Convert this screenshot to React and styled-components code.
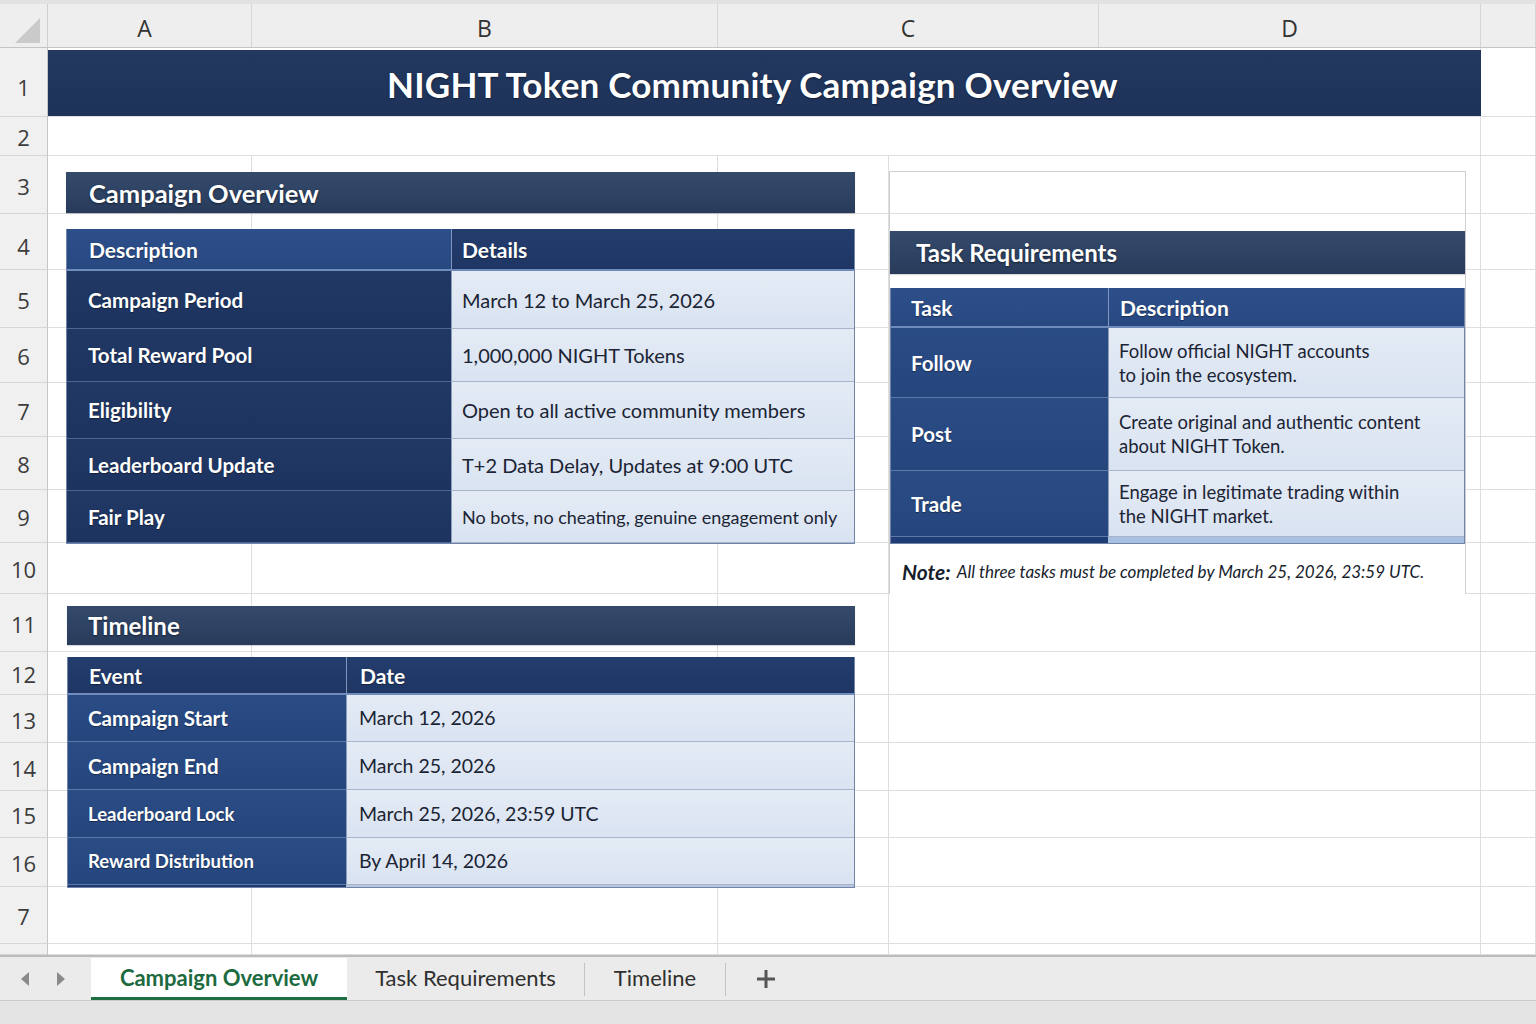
import React from 'react';
import styled, { createGlobalStyle } from 'styled-components';

const GlobalStyle = createGlobalStyle`
  *, *::before, *::after { box-sizing: border-box; }
  html, body { margin: 0; padding: 0; }
  body { font-family: Lato, "Open Sans", sans-serif; background: #ffffff; }
`;

const ROWS = [69, 39, 58, 56, 58, 55, 54, 53, 53, 51, 58, 43, 48, 48, 47, 49, 57, 11];
const ROW_LABELS = ['1', '2', '3', '4', '5', '6', '7', '8', '9', '10', '11', '12', '13', '14', '15', '16', '7', ''];

const Page = styled.div`
  width: 1536px;
  height: 1024px;
  overflow: hidden;
  display: flex;
  flex-direction: column;
  background: #fff;
`;

const ColumnHeaders = styled.div`
  flex: none;
  height: 48px;
  display: grid;
  grid-template-columns: 48px 204px 466px 381px 382px 1fr;
  background: #eeeeee;
  border-top: 4px solid #e2e2e2;
  border-bottom: 1px solid #c4c4c4;
`;

const Corner = styled.div`
  position: relative;
  border-right: 1px solid #cfcfcf;
  &::after {
    content: '';
    position: absolute;
    left: 15px;
    top: 14px;
    width: 25px;
    height: 25px;
    background: #cacaca;
    clip-path: polygon(100% 0, 100% 100%, 0 100%);
  }
`;

const ColLetter = styled.div`
  display: flex;
  align-items: center;
  justify-content: center;
  padding: 4px ${(p) => p.$shift || 0}px 0 0;
  font-family: "Open Sans", sans-serif;
  font-size: 23px;
  color: #333;
  border-right: 1px solid #d6d6d6;
`;

const Sheet = styled.div`
  flex: none;
  display: grid;
  grid-template-columns: 48px 204px 466px 171px 592px 55px;
  grid-template-rows: ${ROWS.map((h) => h + 'px').join(' ')};
`;

const RowHead = styled.div`
  grid-column: 1;
  grid-row: ${(p) => p.$row};
  display: flex;
  align-items: center;
  justify-content: center;
  padding-top: ${(p) => (p.$row === 1 ? 10 : p.$row === 4 ? 8 : 2)}px;
  background: #f0f0f0;
  border-right: 1px solid #c6c6c6;
  border-bottom: 1px solid #d6d6d6;
  font-family: "Open Sans", sans-serif;
  font-size: 22px;
  color: #3c3c3c;
`;

const GridCell = styled.div`
  grid-row: ${(p) => p.$row};
  grid-column: ${(p) => p.$col};
  border-bottom: 1px solid #dedede;
  border-right: 1px solid #dedede;
`;

const TitleBar = styled.div`
  grid-row: 1;
  grid-column: 2 / 6;
  margin: 2px 0 1px;
  display: flex;
  align-items: center;
  justify-content: center;
  padding: 2px 24px 0 0;
  background: linear-gradient(180deg, #22385f 0%, #1f335a 100%);
  color: #fff;
  font-size: 35px;
  font-weight: 700;
  letter-spacing: 0.2px;
  text-shadow: 0 1px 2px rgba(0, 0, 0, 0.45);
`;

const Panel = styled.div`
  grid-row: ${(p) => p.$rows};
  grid-column: ${(p) => p.$cols};
  margin: ${(p) => p.$margin};
  width: ${(p) => p.$width}px;
  display: flex;
  flex-direction: column;
  position: relative;
  z-index: 1;
`;

const BoxedPanel = styled(Panel)`
  border: 1px solid #cfcfcf;
`;

const Spacer = styled.div`
  flex: none;
  height: ${(p) => p.$h}px;
`;

const SectionBar = styled.div`
  flex: none;
  height: ${(p) => p.$h}px;
  display: flex;
  align-items: center;
  padding-left: ${(p) => p.$pad}px;
  background: linear-gradient(180deg, #354a6b 0%, #2e4263 55%, #283b5a 100%);
  color: #fff;
  font-size: ${(p) => p.$size}px;
  font-weight: 700;
  text-shadow: 0 1px 2px rgba(0, 0, 0, 0.5);
  box-shadow: 0 1px 1px rgba(0, 0, 0, 0.15);
`;

const Table = styled.div`
  flex: none;
  display: grid;
  grid-template-columns: ${(p) => p.$first}px 1fr;
  grid-auto-rows: auto;
  border: 1px solid #6f84a8;
  border-top: none;
`;

const HeadCell = styled.div`
  height: ${(p) => p.$h}px;
  display: flex;
  align-items: center;
  padding-left: ${(p) => p.$pad}px;
  background: ${(p) =>
    p.$tone === 'bright'
      ? 'linear-gradient(180deg, #2d4f89 0%, #284882 100%)'
      : 'linear-gradient(180deg, #233d6d 0%, #1f3664 100%)'};
  border-left: ${(p) => (p.$divide ? '1px solid #7f95bb' : 'none')};
  border-bottom: 2px solid #6f8bbb;
  color: #fff;
  font-size: 21px;
  font-weight: 700;
  text-shadow: 0 1px 1px rgba(0, 0, 0, 0.4);
`;

const LabelCell = styled.div`
  height: ${(p) => p.$h}px;
  display: flex;
  align-items: center;
  padding-left: ${(p) => p.$pad}px;
  background: ${(p) =>
    p.$tone === 'bright'
      ? 'linear-gradient(180deg, #2a4c85 0%, #25457d 100%)'
      : 'linear-gradient(180deg, #213865 0%, #1d335f 100%)'};
  border-bottom: 1px solid ${(p) => (p.$tone === 'bright' ? '#5c79a8' : '#4b6594')};
  color: #fff;
  font-size: ${(p) => p.$size}px;
  font-weight: 700;
  text-shadow: 0 1px 1px rgba(0, 0, 0, 0.4);
`;

const ValueCell = styled.div`
  height: ${(p) => p.$h}px;
  display: flex;
  align-items: center;
  padding-left: ${(p) => p.$pad}px;
  background: linear-gradient(180deg, #e4ebf5 0%, #d9e3f1 100%);
  border-left: 1px solid #8c9dba;
  border-bottom: 1px solid #a7b4c9;
  color: #1b2434;
  font-size: ${(p) => p.$size}px;
  line-height: 24px;
`;

const EndStrip = styled.div`
  height: ${(p) => p.$h}px;
  background: ${(p) => p.$color};
`;

const NoteBox = styled.div`
  flex: none;
  height: 50px;
  display: flex;
  align-items: center;
  padding: 4px 0 0 12px;
  background: #fff;
  color: #161d2c;
  font-style: italic;
  font-size: 17px;
  gap: 6px;
  b {
    font-size: 21px;
    font-weight: 700;
  }
`;

const TabBar = styled.div`
  flex: none;
  height: 46px;
  display: flex;
  align-items: stretch;
  background: #ebebeb;
  border-top: 2px solid #bcbcbc;
  border-bottom: 1px solid #cacaca;
`;

const TabNav = styled.div`
  width: 91px;
  display: flex;
  align-items: center;
  justify-content: center;
  gap: 26px;
  padding-right: 6px;
`;

const Tab = styled.div`
  width: ${(p) => p.$w}px;
  display: flex;
  align-items: center;
  justify-content: center;
  font-size: 22px;
  font-weight: ${(p) => (p.$active ? 700 : 400)};
  color: ${(p) => (p.$active ? '#1c6a40' : '#2f2f2f')};
  background: ${(p) => (p.$active ? '#ffffff' : 'transparent')};
  border-bottom: 3px solid ${(p) => (p.$active ? '#1f6d43' : 'transparent')};
  margin-top: 1px;
`;

const TabDivider = styled.div`
  width: 1px;
  margin: 6px 0 4px;
  background: #c2c2c2;
`;

const AddTab = styled.div`
  width: 80px;
  display: flex;
  align-items: center;
  justify-content: center;
`;

const StatusStrip = styled.div`
  flex: 1;
  background: #e4e4e4;
`;

const overviewRows = [
  ['Campaign Period', 'March 12 to March 25, 2026', 58, 20],
  ['Total Reward Pool', '1,000,000 NIGHT Tokens', 53, 20],
  ['Eligibility', 'Open to all active community members', 57, 20],
  ['Leaderboard Update', 'T+2 Data Delay, Updates at 9:00 UTC', 52, 20],
  ['Fair Play', 'No bots, no cheating, genuine engagement only', 52, 18],
];

const timelineRows = [
  ['Campaign Start', 'March 12, 2026', 47, 20.5],
  ['Campaign End', 'March 25, 2026', 48, 20.5],
  ['Leaderboard Lock', 'March 25, 2026, 23:59 UTC', 48, 18.5],
  ['Reward Distribution', 'By April 14, 2026', 47, 18.5],
];

const taskRows = [
  ['Follow', ['Follow official NIGHT accounts', 'to join the ecosystem.'], 70],
  ['Post', ['Create original and authentic content', 'about NIGHT Token.'], 73],
  ['Trade', ['Engage in legitimate trading within', 'the NIGHT market.'], 66],
];

function Arrow({ dir }) {
  return (
    <svg width="10" height="16" viewBox="0 0 10 16">
      <polygon points={dir === 'left' ? '9,1 9,15 1,8' : '1,1 1,15 9,8'} fill="#8a8a8a" />
    </svg>
  );
}

function PlusIcon() {
  return (
    <svg width="22" height="22" viewBox="0 0 22 22">
      <path d="M11 2 V20 M2 11 H20" stroke="#555" strokeWidth="3" />
    </svg>
  );
}

function SheetGrid() {
  const cells = [];
  ROWS.forEach((_, i) => {
    const row = i + 1;
    cells.push(
      <RowHead key={'h' + row} $row={row}>
        {ROW_LABELS[i]}
      </RowHead>
    );
    if (row <= 2) {
      cells.push(<GridCell key={'m' + row} $row={row} $col="2 / 6" />);
      cells.push(<GridCell key={'e' + row} $row={row} $col="6" />);
    } else {
      [2, 3, 4, 5, 6].forEach((c) => cells.push(<GridCell key={row + '-' + c} $row={row} $col={c} />));
    }
  });
  return cells;
}

export default function App() {
  return (
    <Page>
      <GlobalStyle />
      <ColumnHeaders>
        <Corner />
        <ColLetter $shift={10}>A</ColLetter>
        <ColLetter>B</ColLetter>
        <ColLetter>C</ColLetter>
        <ColLetter>D</ColLetter>
        <ColLetter />
      </ColumnHeaders>

      <Sheet>
        <SheetGrid />

        <TitleBar>NIGHT Token Community Campaign Overview</TitleBar>

        <Panel $rows="3 / 10" $cols="2 / 5" $margin="16px 0 0 18px" $width={789}>
          <SectionBar $h={41} $pad={23} $size={25.5}>Campaign Overview</SectionBar>
          <Spacer $h={16} />
          <Table $first={384}>
            <HeadCell $h={42} $pad={22} $tone="bright">Description</HeadCell>
            <HeadCell $h={42} $pad={10} $divide>Details</HeadCell>
            {overviewRows.map(([label, value, h, size]) => (
              <React.Fragment key={label}>
                <LabelCell $h={h} $pad={21} $size={20.5}>{label}</LabelCell>
                <ValueCell $h={h} $pad={10} $size={size}>{value}</ValueCell>
              </React.Fragment>
            ))}
          </Table>
        </Panel>

        <Panel $rows="11 / 17" $cols="2 / 5" $margin="12px 0 0 19px" $width={788}>
          <SectionBar $h={39} $pad={21} $size={24}>Timeline</SectionBar>
          <Spacer $h={12} />
          <Table $first={278}>
            <HeadCell $h={38} $pad={21}>Event</HeadCell>
            <HeadCell $h={38} $pad={13} $divide>Date</HeadCell>
            {timelineRows.map(([label, value, h, size]) => (
              <React.Fragment key={label}>
                <LabelCell $h={h} $pad={20} $size={size} $tone="bright">{label}</LabelCell>
                <ValueCell $h={h} $pad={12} $size={19.5}>{value}</ValueCell>
              </React.Fragment>
            ))}
            <EndStrip $h={2} $color="#1f3a70" />
            <EndStrip $h={2} $color="#b7c6dd" />
          </Table>
        </Panel>

        <BoxedPanel $rows="3 / 11" $cols="5" $margin="15px 0 0 0" $width={577}>
          <Spacer $h={59} />
          <SectionBar $h={43} $pad={26} $size={24}>Task Requirements</SectionBar>
          <Spacer $h={14} />
          <Table $first={217}>
            <HeadCell $h={40} $pad={20} $tone="bright">Task</HeadCell>
            <HeadCell $h={40} $pad={11} $tone="bright" $divide>Description</HeadCell>
            {taskRows.map(([label, lines, h]) => (
              <React.Fragment key={label}>
                <LabelCell $h={h} $pad={20} $size={20.5} $tone="bright">{label}</LabelCell>
                <ValueCell $h={h} $pad={10} $size={18.5}>
                  <div>
                    {lines.map((l) => (
                      <div key={l}>{l}</div>
                    ))}
                  </div>
                </ValueCell>
              </React.Fragment>
            ))}
            <EndStrip $h={6} $color="#1f3c74" />
            <EndStrip $h={6} $color="#a9bfdf" />
          </Table>
          <NoteBox>
            <b>Note:</b>
            <span>All three tasks must be completed by March 25, 2026, 23:59 UTC.</span>
          </NoteBox>
        </BoxedPanel>
      </Sheet>

      <TabBar>
        <TabNav>
          <Arrow dir="left" />
          <Arrow dir="right" />
        </TabNav>
        <Tab $w={256} $active>Campaign Overview</Tab>
        <Tab $w={237}>Task Requirements</Tab>
        <TabDivider />
        <Tab $w={140}>Timeline</Tab>
        <TabDivider />
        <AddTab>
          <PlusIcon />
        </AddTab>
      </TabBar>
      <StatusStrip />
    </Page>
  );
}
